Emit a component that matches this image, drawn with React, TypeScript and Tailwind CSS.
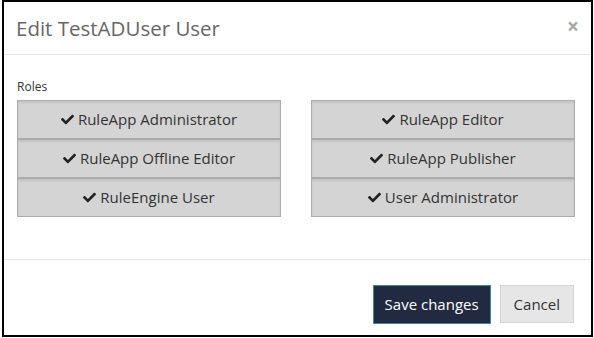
import React from "react";
import { FaCheck } from "react-icons/fa";

const leftRoles = ["RuleApp Administrator", "RuleApp Offline Editor", "RuleEngine User"];
const rightRoles = ["RuleApp Editor", "RuleApp Publisher", "User Administrator"];

const RoleButton: React.FC<{ label: string }> = ({ label }) => (
  <button className="h-[39px] w-full flex items-center justify-center gap-[4px] bg-[#d4d4d4] border border-[#ababab] text-[15px] text-[#333] shadow-[inset_0_2px_2px_rgba(0,0,0,0.08)]">
    <FaCheck className="w-[13px] h-[13px] text-[#222]" />
    <span>{label}</span>
  </button>
);

const App: React.FC = () => {
  return (
    <div className="w-[594px] h-[338px] bg-white font-['Open_Sans',sans-serif]">
      <div className="ml-[2px] w-[591px] h-[337px] border-2 border-black flex flex-col">
        {/* Header */}
        <div className="h-[53px] border-b border-[#e5e5e5] flex items-center justify-between pl-[12px] pr-[12px]">
          <h4 className="text-[20.5px] text-[#666] leading-none">Edit TestADUser User</h4>
          <button className="text-[21px] font-bold text-[#a8a8a8] leading-none pb-[3px]">×</button>
        </div>

        {/* Body */}
        <div className="h-[205px] border-b border-[#e5e5e5] pt-[23px] pl-[13px]">
          <div className="text-[12px] text-[#333] leading-[17px] mb-[5px]">Roles</div>
          <div className="grid grid-cols-[264px_264px] gap-x-[30px]">
            <div className="flex flex-col">
              {leftRoles.map((r) => (
                <RoleButton key={r} label={r} />
              ))}
            </div>
            <div className="flex flex-col">
              {rightRoles.map((r) => (
                <RoleButton key={r} label={r} />
              ))}
            </div>
          </div>
        </div>

        {/* Footer */}
        <div className="flex justify-end gap-[9px] pt-[25px] pr-[17px]">
          <button className="h-[39px] px-[11px] bg-[#222a42] border border-[#3b8a9c] text-white text-[15px]">
            Save changes
          </button>
          <button className="h-[38px] px-[13px] bg-[#e6e6e6] border border-[#d4d4d4] text-[#333] text-[15px]">
            Cancel
          </button>
        </div>
      </div>
    </div>
  );
};

export default App;
